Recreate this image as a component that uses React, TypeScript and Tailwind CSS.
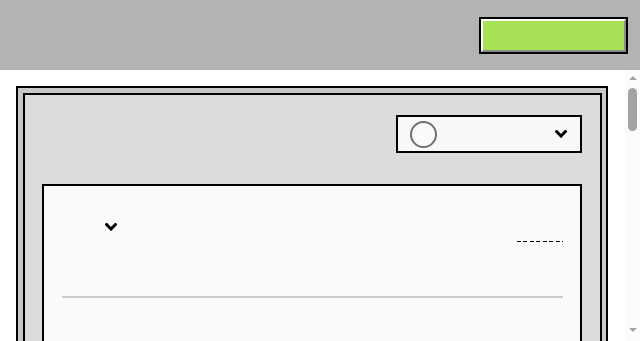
function Chevron({ className }: { className?: string }) {
  return (
    <svg viewBox="0 0 12 8" className={className} fill="none">
      <path d="M1.6 1.6 L6 6 L10.4 1.6" stroke="black" strokeWidth="3" strokeLinecap="square" />
    </svg>
  );
}

function Scrollbar() {
  return (
    <div className="flex w-[15px] shrink-0 flex-col items-center bg-[#fbfbfb]">
      <div className="flex h-[15px] items-center justify-center">
        <span className="h-0 w-0 border-x-[4px] border-b-[4px] border-x-transparent border-b-[#a3a3a3]" />
      </div>
      <div className="mt-[3px] h-[43px] w-[9px] rounded-full bg-[#a3a3a3]" />
      <div className="flex-1" />
      <div className="flex h-[15px] items-start justify-center pt-[2px]">
        <span className="h-0 w-0 border-x-[4px] border-t-[4px] border-x-transparent border-t-[#a3a3a3]" />
      </div>
    </div>
  );
}

export default function App() {
  return (
    <div className="flex h-[341px] flex-col font-['Liberation_Sans',sans-serif]">
      <header className="flex h-[70px] shrink-0 items-center justify-end bg-[#b3b3b3] pr-3">
        <button className="h-[37px] w-[149px] border-2 border-black bg-[#a7e256]">
          <span className="block h-full w-full border-2 border-t-white border-l-white border-r-[#8c8c8c] border-b-[#8c8c8c]" />
        </button>
      </header>

      <div className="flex min-h-0 flex-1">
        <main className="min-w-0 flex-1 overflow-hidden bg-white pl-4 pr-[17px] pt-4">
          <div className="border-2 border-black bg-[#c8c8c8] p-[5px] pr-1">
            <div className="border-2 border-black bg-[#dcdcdc] pl-[17px] pr-[18px] pt-5 pb-5">
              <div className="flex justify-end">
                <div className="flex h-[38px] w-[186px] items-center justify-between border-2 border-black bg-[#f8f8f8] pl-3 pr-[13px]">
                  <span className="h-[27px] w-[27px] rounded-full border-2 border-[#707070] bg-[#fafafa]" />
                  <Chevron className="h-[8px] w-[12px]" />
                </div>
              </div>

              <div className="mt-[31px] h-[1400px] border-2 border-black bg-[#fafafa] pl-[18px] pr-[17px]">
                <div className="flex h-[110px] items-start justify-between">
                  <Chevron className="ml-[43px] mt-[37px] h-[8px] w-[12px]" />
                  <span className="mt-[55px] block h-px w-[46px] bg-[repeating-linear-gradient(90deg,#000_0_4px,transparent_4px_6.5px)]" />
                </div>
                <div className="h-[2px] bg-[#cccccc]" />
              </div>
            </div>
          </div>
        </main>
        <Scrollbar />
      </div>
    </div>
  );
}
